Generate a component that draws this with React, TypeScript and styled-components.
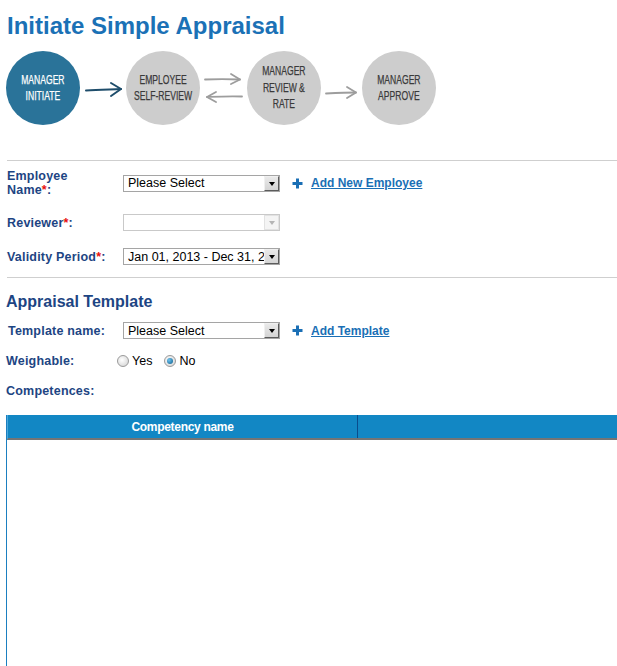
import * as React from 'react';
import styled, { createGlobalStyle, css } from 'styled-components';

const GlobalStyle = createGlobalStyle`
  html, body {
    margin: 0;
    padding: 0;
    background: #fff;
    overflow: hidden;
  }
  body {
    font-family: 'Liberation Sans', Arial, sans-serif;
    font-size: 12px;
  }
`;

const navy = '#1d4583';
const linkBlue = '#1a6fb5';

const Page = styled.div`
  padding: 13px 0 0 6px;
  width: 611px;
`;

const Title = styled.h1`
  margin: 0 0 0 1px;
  font-size: 24px;
  line-height: 26px;
  font-weight: bold;
  color: #1b71b6;
`;

const Steps = styled.div`
  display: flex;
  align-items: center;
  margin-top: 12px;
  height: 74px;
`;

const StepCircle = styled.div<{ active?: boolean }>`
  width: 74px;
  height: 74px;
  border-radius: 50%;
  flex-shrink: 0;
  display: flex;
  align-items: center;
  justify-content: center;
  background: ${(p) => (p.active ? '#2a7399' : '#cdcdcd')};
  color: ${(p) => (p.active ? '#ffffff' : '#3a3a3a')};
`;

const StepLabel = styled.span`
  display: block;
  text-align: center;
  font-size: 13px;
  line-height: 16.5px;
  white-space: nowrap;
  transform: scaleX(0.66);
  -webkit-text-stroke: 0.25px currentColor;
`;

const Connector = styled.svg`
  flex-shrink: 0;
  display: block;
`;

const Divider = styled.hr<{ $top: number; $bottom: number }>`
  border: 0;
  border-top: 1px solid #cfcfcf;
  margin: ${(p) => `${p.$top}px 0 ${p.$bottom}px 1px`};
  height: 0;
`;

const FormGrid = styled.div<{ $gap: number }>`
  display: grid;
  grid-template-columns: 117px auto;
  grid-auto-rows: minmax(17px, auto);
  row-gap: ${(p) => p.$gap}px;
  align-items: center;
`;

const Label = styled.label<{ $indent?: number }>`
  font-weight: bold;
  font-size: 12.5px;
  letter-spacing: 0.2px;
  line-height: 14px;
  color: ${navy};
  padding-left: ${(p) => p.$indent ?? 1}px;
`;

const Required = styled.span`
  color: #e8110e;
`;

const Field = styled.div`
  display: flex;
  align-items: center;
`;

const SelectBox = styled.div<{ disabled?: boolean }>`
  width: 157px;
  height: 17px;
  box-sizing: border-box;
  border: 1px solid ${(p) => (p.disabled ? '#c9c9c9' : '#a5a5a5')};
  background: #fff;
  display: flex;
  align-items: center;
  overflow: hidden;
`;

const SelectText = styled.span`
  flex: 1;
  min-width: 0;
  padding-left: 4px;
  font-size: 12.5px;
  color: #000;
  white-space: nowrap;
  overflow: hidden;
`;

const SelectButton = styled.span<{ disabled?: boolean }>`
  width: 15px;
  height: 15px;
  box-sizing: border-box;
  flex-shrink: 0;
  display: flex;
  align-items: center;
  justify-content: center;
  ${(p) =>
    p.disabled
      ? css`
          background: #f4f4f4;
          border: 1px solid #e2e2e2;
        `
      : css`
          background: linear-gradient(#e9e9e9, #d4d4d4);
          border: 1px solid;
          border-color: #f0f0f0 #5c5c5c #5c5c5c #f0f0f0;
        `}
  &::after {
    content: '';
    border-left: 3.5px solid transparent;
    border-right: 3.5px solid transparent;
    border-top: 4px solid ${(p) => (p.disabled ? '#b5b5b5' : '#000')};
    margin-top: 1px;
  }
`;

const AddLink = styled.a`
  display: inline-flex;
  align-items: center;
  margin-left: 12px;
  color: ${linkBlue};
  font-weight: bold;
  font-size: 12px;
  text-decoration: underline;
  cursor: pointer;
  svg {
    margin-right: 8px;
  }
`;

const SectionTitle = styled.h2`
  margin: 0 0 11px 0;
  font-size: 16px;
  line-height: 18px;
  font-weight: bold;
  color: ${navy};
`;

const RadioGroup = styled.div`
  display: flex;
  align-items: center;
  margin-left: -6px;
  gap: 12px;
`;

const RadioOption = styled.span`
  display: inline-flex;
  align-items: center;
  gap: 3px;
  font-size: 12.5px;
  color: #000;
`;

const RadioDot = styled.span<{ checked?: boolean }>`
  width: 12px;
  height: 12px;
  border-radius: 50%;
  box-sizing: border-box;
  border: 1px solid #9a9a9a;
  background: radial-gradient(circle at 40% 40%, #ffffff, #cfcfcf);
  display: inline-flex;
  align-items: center;
  justify-content: center;
  &::after {
    content: '';
    display: ${(p) => (p.checked ? 'block' : 'none')};
    width: 6px;
    height: 6px;
    border-radius: 50%;
    background: radial-gradient(circle at 35% 35%, #6fc3ee, #0b5c8c);
  }
`;

const Grid = styled.div`
  margin-top: 16px;
  width: 760px;
  border-left: 1px solid #1b7fc0;
`;

const GridHead = styled.div`
  display: flex;
  height: 23px;
  background: #1287c4;
  border-bottom: 2px solid #747474;
  border-left: 1px solid #4aa8dc;
`;

const HeadCell = styled.div<{ $width?: number }>`
  ${(p) => (p.$width ? `width: ${p.$width}px;` : 'flex: 1;')}
  display: flex;
  align-items: center;
  justify-content: center;
  color: #fff;
  font-weight: bold;
  font-size: 12px;
  letter-spacing: -0.3px;
  & + & {
    border-left: 1px solid #0a4c8c;
  }
`;

const GridBody = styled.div`
  height: 240px;
  background: #fff;
`;

const PlusIcon = () => (
  <svg width="11" height="11" viewBox="0 0 11 11">
    <path d="M5.5 0.5v10M0.5 5.5h10" stroke={linkBlue} strokeWidth="3" />
  </svg>
);

type ArrowKind = 'lead' | 'swap' | 'next';

const StepArrow: React.FC<{ width: number; kind: ArrowKind }> = ({ width, kind }) => {
  const dark = '#1e4d6b';
  const grey = '#9d9d9d';
  return (
    <Connector width={width} height={74} viewBox={`0 0 ${width} 74`}>
      {kind === 'lead' && (
        <g fill="none" stroke={dark} strokeWidth="2" strokeLinecap="round" strokeLinejoin="round">
          <path d="M6 39.5 C 18 38.5, 30 38.5, 41 38" />
          <path d="M31 32 L41 38 L31 45" />
        </g>
      )}
      {kind === 'swap' && (
        <g fill="none" stroke={grey} strokeWidth="1.8" strokeLinecap="round" strokeLinejoin="round">
          <path d="M5 28.5 C 16 28, 28 28, 40 28.5" />
          <path d="M31 23 L40 28.5 L31 33" />
          <path d="M42 45.5 C 30 45, 19 45.5, 7 46" />
          <path d="M16 41 L7 46 L16 51" />
        </g>
      )}
      {kind === 'next' && (
        <g fill="none" stroke={grey} strokeWidth="1.8" strokeLinecap="round" strokeLinejoin="round">
          <path d="M5 42.5 C 15 42, 25 41.5, 35 41.5" />
          <path d="M26 36 L35 41.5 L26 47" />
        </g>
      )}
    </Connector>
  );
};

const Select: React.FC<{ value?: string; disabled?: boolean }> = ({ value, disabled }) => (
  <SelectBox disabled={disabled}>
    <SelectText>{value}</SelectText>
    <SelectButton disabled={disabled} />
  </SelectBox>
);

const App: React.FC = () => (
  <>
    <GlobalStyle />
    <Page>
      <Title>Initiate Simple Appraisal</Title>

      <Steps>
        <StepCircle active>
          <StepLabel>
            MANAGER
            <br />
            INITIATE
          </StepLabel>
        </StepCircle>
        <StepArrow width={46} kind="lead" />
        <StepCircle>
          <StepLabel>
            EMPLOYEE
            <br />
            SELF-REVIEW
          </StepLabel>
        </StepCircle>
        <StepArrow width={47} kind="swap" />
        <StepCircle>
          <StepLabel>
            MANAGER
            <br />
            REVIEW &amp;
            <br />
            RATE
          </StepLabel>
        </StepCircle>
        <StepArrow width={41} kind="next" />
        <StepCircle>
          <StepLabel>
            MANAGER
            <br />
            APPROVE
          </StepLabel>
        </StepCircle>
      </Steps>

      <Divider $top={35} $bottom={8} />

      <FormGrid $gap={17}>
        <Label>
          Employee
          <br />
          Name<Required>*</Required>:
        </Label>
        <Field>
          <Select value="Please Select" />
          <AddLink>
            <PlusIcon />
            Add New Employee
          </AddLink>
        </Field>

        <Label>
          Reviewer<Required>*</Required>:
        </Label>
        <Field>
          <Select disabled />
        </Field>

        <Label>
          Validity Period<Required>*</Required>:
        </Label>
        <Field>
          <Select value="Jan 01, 2013 - Dec 31, 2013" />
        </Field>
      </FormGrid>

      <Divider $top={12} $bottom={15} />

      <SectionTitle>Appraisal Template</SectionTitle>

      <FormGrid $gap={13}>
        <Label $indent={2}>Template name:</Label>
        <Field>
          <Select value="Please Select" />
          <AddLink>
            <PlusIcon />
            Add Template
          </AddLink>
        </Field>

        <Label $indent={0}>Weighable:</Label>
        <RadioGroup>
          <RadioOption>
            <RadioDot />
            Yes
          </RadioOption>
          <RadioOption>
            <RadioDot checked />
            No
          </RadioOption>
        </RadioGroup>

        <Label $indent={0}>Competences:</Label>
        <span />
      </FormGrid>

      <Grid>
        <GridHead>
          <HeadCell $width={349}>Competency name</HeadCell>
          <HeadCell />
        </GridHead>
        <GridBody />
      </Grid>
    </Page>
  </>
);

export default App;
